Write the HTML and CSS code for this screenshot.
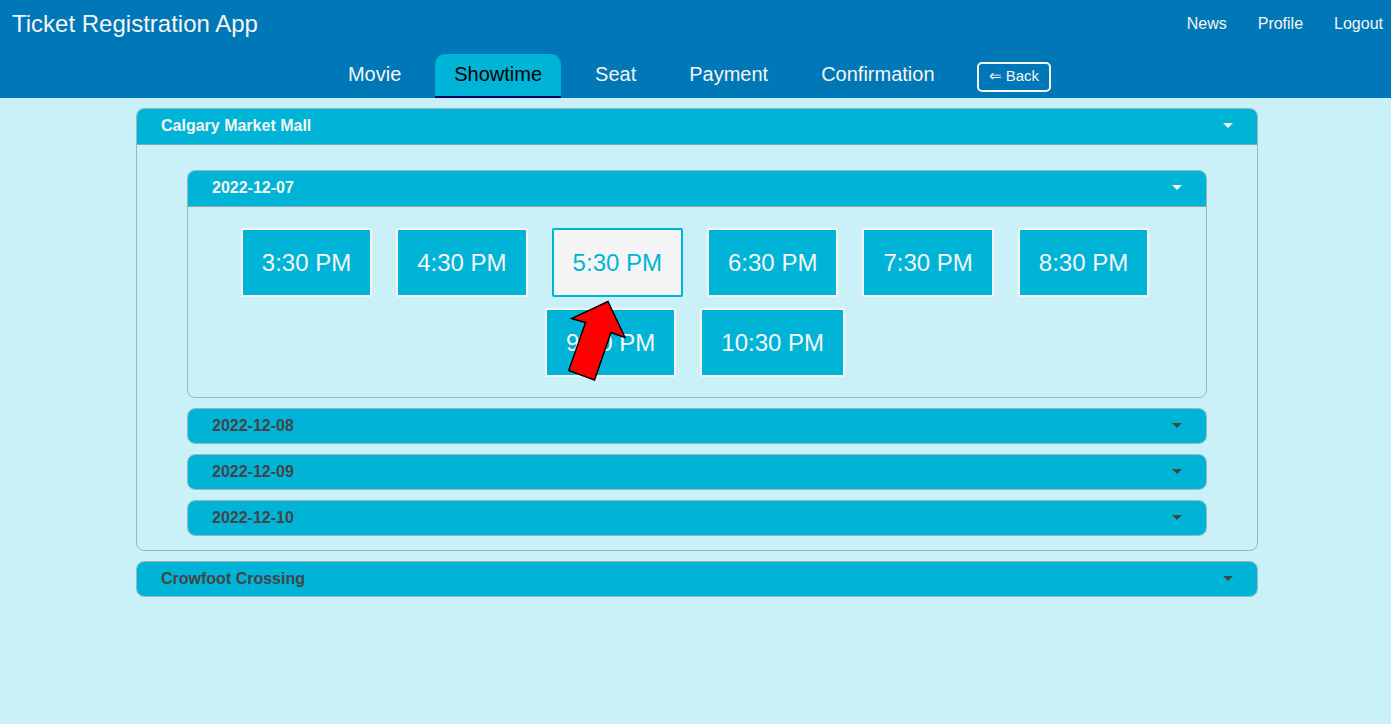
FILE: index.html
```html
<!DOCTYPE html>
<html lang="en">
<head>
<meta charset="utf-8">
<title>Ticket Registration App</title>
<link rel="stylesheet" href="styles.css">
</head>
<body>
<header class="header">
  <div class="topbar">
    <h1 class="title">Ticket Registration App</h1>
    <nav class="links">
      <a href="#news">News</a>
      <a href="#profile">Profile</a>
      <a href="#logout">Logout</a>
    </nav>
  </div>
  <nav class="steps">
    <a class="step" href="#movie">Movie</a>
    <a class="step active" href="#showtime" aria-current="step">Showtime</a>
    <a class="step" href="#seat">Seat</a>
    <a class="step" href="#payment">Payment</a>
    <a class="step" href="#confirmation">Confirmation</a>
    <button class="back" type="button">⇐ Back</button>
  </nav>
</header>
<main class="theatres">
  <details class="panel" open>
    <summary class="panel-head">Calgary Market Mall<span class="caret"></span></summary>
    <div class="dates">
      <details class="panel" open>
        <summary class="panel-head">2022-12-07<span class="caret"></span></summary>
        <div class="times">
          <button class="time" type="button">3:30 PM</button>
          <button class="time" type="button">4:30 PM</button>
          <button class="time selected" type="button">5:30 PM</button>
          <button class="time" type="button">6:30 PM</button>
          <button class="time" type="button">7:30 PM</button>
          <button class="time" type="button">8:30 PM</button>
          <div class="pointed">
            <button class="time" type="button">9:30 PM</button>
            <svg class="pointer" width="60" height="84" viewBox="0 0 60 84" aria-hidden="true">
              <path d="M40 3.500 3.500 20.500 17.500 24.500 0.700 72.500 26.500 82 43 34.500 57 39.500Z" fill="#f00" stroke="#000" stroke-width="1.400"/>
            </svg>
          </div>
          <button class="time" type="button">10:30 PM</button>
        </div>
      </details>
      <details class="panel">
        <summary class="panel-head">2022-12-08<span class="caret"></span></summary>
      </details>
      <details class="panel">
        <summary class="panel-head">2022-12-09<span class="caret"></span></summary>
      </details>
      <details class="panel">
        <summary class="panel-head">2022-12-10<span class="caret"></span></summary>
      </details>
    </div>
  </details>
  <details class="panel">
    <summary class="panel-head">Crowfoot Crossing<span class="caret"></span></summary>
  </details>
</main>
</body>
</html>
```
FILE: styles.css
```css
* {
  box-sizing: border-box;
}

body {
  margin: 0;
  background: #caf0f8;
  font-family: "Liberation Sans", Arial, sans-serif;
  font-size: 16px;
}

.header {
  background: #0077b6;
  color: #f5f5f5;
}

.header a {
  color: inherit;
  text-decoration: none;
}

.topbar {
  display: flex;
  justify-content: space-between;
  align-items: center;
  padding: 10px 8px 16px 12px;
}

.title {
  margin: 0;
  font-size: 24px;
  font-weight: 400;
  line-height: 28px;
}

.links {
  display: flex;
  gap: 31px;
}

.steps {
  display: flex;
  justify-content: center;
  gap: 15px;
  padding-right: 11px;
}

.step {
  padding: 8px 19px 10px;
  border-bottom: 2px solid transparent;
  border-radius: 10px 10px 0 0;
  font-size: 20px;
  line-height: 24px;
}

.header .active {
  background: linear-gradient(#03045e, #03045e) bottom / 100% 2px no-repeat #00b4d8;
  background-origin: border-box;
  color: #000;
}

.back {
  align-self: flex-start;
  height: 30px;
  margin: 8px 0 0 8px;
  padding: 0 10px 2px;
  border: 2px solid #f5f5f5;
  border-radius: 5px;
  background: transparent;
  color: #f5f5f5;
  font-family: "Liberation Sans", Arial, sans-serif;
  font-size: 15px;
}

.theatres {
  display: flex;
  flex-direction: column;
  gap: 10px;
  padding: 10px 133px 10px 136px;
}

.panel {
  border: 1px solid #9eb5ba;
  border-radius: 8px;
  overflow: hidden;
}

.panel-head {
  display: flex;
  justify-content: space-between;
  align-items: center;
  padding: 8px 24px;
  background: #00b4d8;
  color: #444;
  font-weight: 700;
  line-height: 18px;
  cursor: pointer;
}

.panel[open] > .panel-head {
  padding-bottom: 9px;
  border-bottom: 1px solid #8fa3a8;
  color: #f5f5f5;
}

.caret {
  margin-bottom: 2px;
  border: 5px solid transparent;
  border-top-color: currentColor;
  border-bottom: 0;
}

.dates {
  display: flex;
  flex-direction: column;
  gap: 10px;
  padding: 25px 50px 14px;
}

.times {
  display: flex;
  flex-wrap: wrap;
  justify-content: center;
  gap: 11px 24px;
  padding: 21px 50px 20px 46px;
}

.time {
  padding: 19px;
  border: 2px solid #f5f5f5;
  border-radius: 2px;
  background: #00b4d8;
  color: #f5f5f5;
  font-family: inherit;
  font-size: 24px;
  line-height: 27px;
}

.selected {
  border-color: #00b4d8;
  background: #f5f5f5;
  color: #00b4d8;
}

.pointed {
  position: relative;
}

/* Overlaps the 9:30 button and points up at the selected time */
.pointer {
  position: absolute;
  top: -10px;
  left: 23px;
}
```
